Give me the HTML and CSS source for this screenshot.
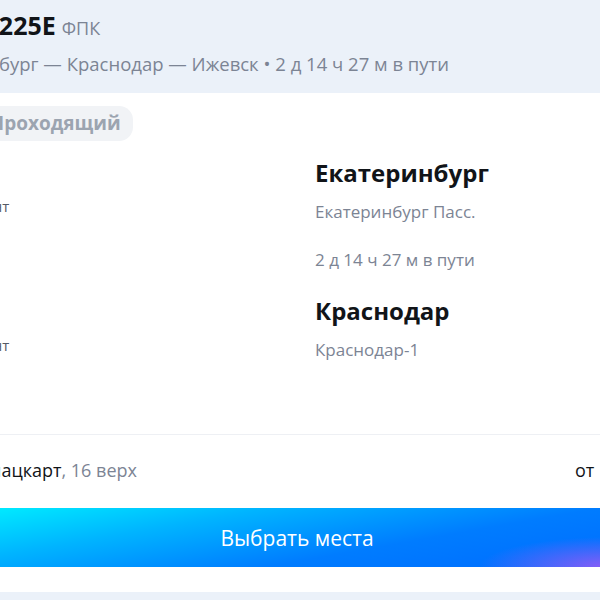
FILE: index.html
```html
<!DOCTYPE html>
<html lang="ru">
<head>
    <meta charset="UTF-8">
    <title>Поезд 225Е</title>
    <link rel="stylesheet" href="styles.css">
</head>
<body>
    <div class="page">
        <header class="train-head">
            <div class="train-title">
                <span class="train-num">Поезд 225Е</span>
                <span class="carrier">ФПК</span>
            </div>
            <div class="route">Екатеринбург — Краснодар — Ижевск • 2 д 14 ч 27 м в пути</div>
        </header>

        <section class="card">
            <span class="badge">Проходящий</span>

            <div class="trip">
                <div class="dates">
                    <div class="date">12 сент</div>
                    <div class="date date-arr">15 сент</div>
                </div>
                <div class="stops">
                    <div class="city">Екатеринбург</div>
                    <div class="station">Екатеринбург Пасс.</div>
                    <div class="duration">2 д 14 ч 27 м в пути</div>
                    <div class="city">Краснодар</div>
                    <div class="station">Краснодар-1</div>
                </div>
            </div>

            <div class="fare">
                <div class="seat">Плацкарт<span class="seat-place">, 16 верх</span></div>
                <div class="price"><span>от</span> <b>5 140 ₽</b></div>
            </div>

            <button class="choose">Выбрать места</button>
        </section>

        <div class="next"></div>
    </div>
</body>
</html>
```

FILE: styles.css
```css
:root {
    --color-text: #111418;
    --color-muted: #7c8494;
    --color-head: #ebf1f9;
    --color-line: #eef0f4;
}

body {
    margin: 0;
    overflow: hidden;
    background-color: #ffffff;
    font-family: 'Open Sans', 'Noto Sans', sans-serif;
    color: var(--color-text);
}

.page {
    width: 740px;
    margin-left: -100px;
}

/* шапка поезда */
.train-head {
    background-color: var(--color-head);
    padding: 10px 24px 17px 15px;
}

.train-title {
    display: flex;
    align-items: baseline;
    gap: 6px;
    height: 30px;
    line-height: 30px;
    margin-left: -2px;
}

.train-num {
    font-size: 25px;
    font-weight: 700;
}

.carrier {
    font-size: 18px;
    color: var(--color-muted);
}

.route {
    margin-top: 12px;
    font-size: 18.5px;
    line-height: 24px;
    color: var(--color-muted);
}

/* карточка */
.card {
    padding: 13px 24px 25px 78px;
}

.badge {
    display: block;
    width: max-content;
    padding: 5px 12px;
    border-radius: 14px;
    background-color: #f1f3f6;
    color: #9ca4b0;
    font-size: 19px;
    font-weight: 700;
    line-height: 25px;
}

.trip {
    display: grid;
    grid-template-columns: 337px 1fr;
    margin-top: 16px;
    padding-bottom: 72px;
    border-bottom: 1px solid var(--color-line);
}

.dates {
    margin-left: -22px;
    padding-top: 38px;
}

.date {
    font-size: 15px;
    line-height: 22px;
    color: #555b66;
}

.date-arr {
    margin-top: 117px;
}

.city {
    font-size: 24px;
    font-weight: 700;
    line-height: 32px;
}

.station {
    margin-top: 11px;
    font-size: 17px;
    line-height: 24px;
    color: var(--color-muted);
}

.duration {
    margin: 24px 0 23px;
    font-size: 17px;
    line-height: 24px;
    color: var(--color-muted);
}

.fare {
    display: flex;
    justify-content: space-between;
    padding: 23px 0 26px;
    font-size: 18px;
    line-height: 24px;
}

.seat-place {
    color: var(--color-muted);
}

.price {
    display: flex;
    gap: 10px;
    flex: 0 0 41px;
    min-width: 0;
    white-space: nowrap;
}

.choose {
    display: block;
    width: 100%;
    height: 59px;
    border: none;
    color: #ffffff;
    font-family: 'Open Sans', 'Noto Sans', sans-serif;
    font-size: 21px;
    background:
        radial-gradient(ellipse 130px 30px at 99% 100%, rgba(146, 92, 246, 0.95), rgba(146, 92, 246, 0)),
        linear-gradient(170deg, #00eeff 0%, #00b4ff 30%, #007cff 64%, #006cff 100%);
    cursor: pointer;
}

.next {
    height: 20px;
    background-color: var(--color-head);
}
```
